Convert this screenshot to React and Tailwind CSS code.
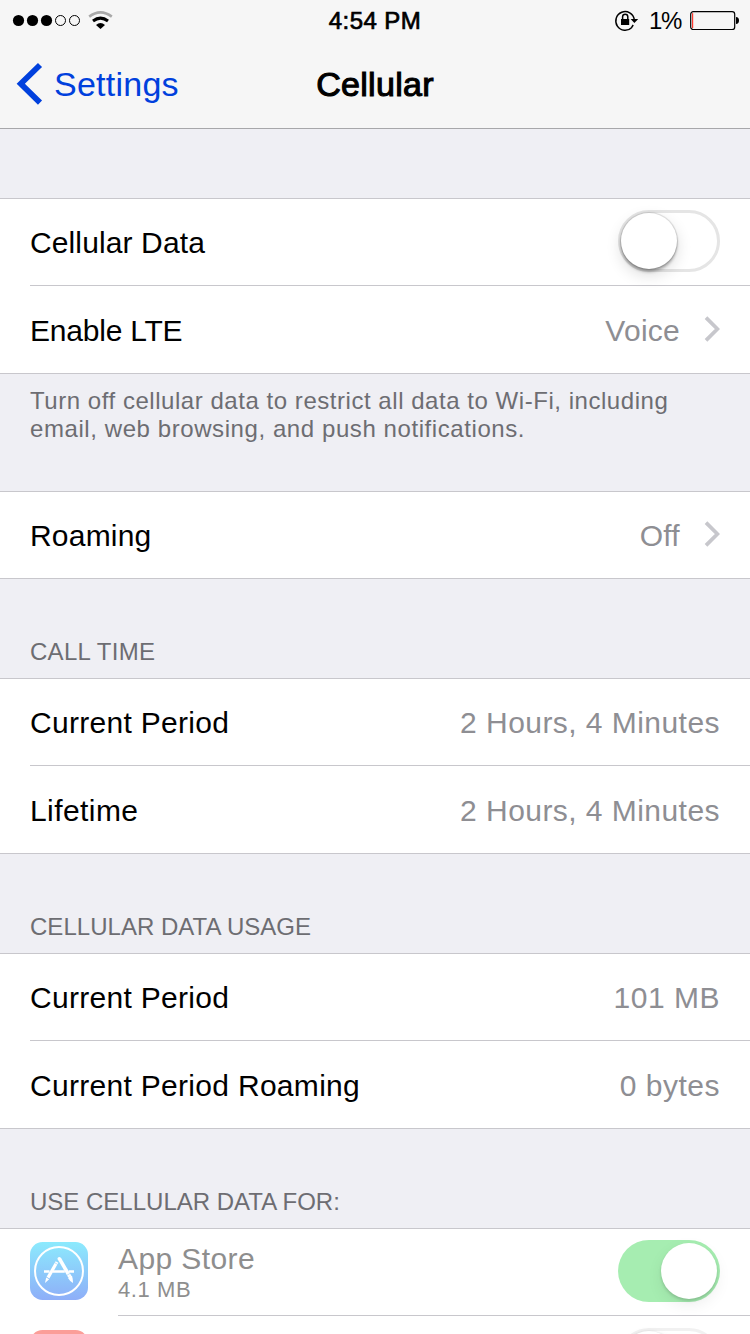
import React from 'react';

function Chevron() {
  return (
    <svg className="ml-[23px] mt-[-4px] shrink-0" width="17" height="28" viewBox="0 0 17 28" fill="none">
      <path d="M3 2.6 L14.4 14 L3 25.4" stroke="#c7c7cc" strokeWidth="3.7" />
    </svg>
  );
}

function Label({ children, track }) {
  return <span className={'text-[30px] leading-[36px] text-black ' + track}>{children}</span>;
}

function Value({ children, track }) {
  return <span className={'ml-auto text-[30px] leading-[36px] text-[#8e8e93] ' + track}>{children}</span>;
}

function FirstRow({ children }) {
  return (
    <div className="flex h-[87px] pl-[30px]">
      <div className="flex grow items-center border-b border-[#c8c7cc] pr-[30px] pt-[2px]">{children}</div>
    </div>
  );
}

function LastRow({ children }) {
  return <div className="flex h-[87px] items-center px-[30px] pt-[3px]">{children}</div>;
}

function Group({ children }) {
  return <section className="border-y border-[#c8c7cc] bg-white">{children}</section>;
}

function SectionTitle({ children, track }) {
  return (
    <h2 className={'flex h-[99px] items-end px-[30px] pb-[11px] text-[24px] leading-[30px] text-[#6d6d72] ' + track}>
      {children}
    </h2>
  );
}

function StatusBar() {
  return (
    <div className="grid h-[40px] grid-cols-3">
      <div className="flex items-start">
        <svg width="120" height="40" viewBox="0 0 120 40" fill="none">
          <circle cx="18.5" cy="20.5" r="5.6" fill="#000" />
          <circle cx="32.5" cy="20.5" r="5.6" fill="#000" />
          <circle cx="46.5" cy="20.5" r="5.6" fill="#000" />
          <circle cx="60.5" cy="20.5" r="5" stroke="#000" strokeWidth="1" />
          <circle cx="74.5" cy="20.5" r="5" stroke="#000" strokeWidth="1" />
          <path d="M89.2 16.6 Q100.5 8 111.8 16.6" stroke="#a9a9a9" strokeWidth="2.6" />
          <path d="M93 21 Q100.5 15.2 108 21" stroke="#000" strokeWidth="3" />
          <path d="M96 24.9 Q100.5 21 105 24.9 L100.5 29 Z" fill="#000" />
        </svg>
      </div>
      <div className="flex justify-center pt-[6px] text-[24px] leading-[30px] tracking-[0.45px] text-black [-webkit-text-stroke:0.7px_#000]">
        4:54 PM
      </div>
      <div className="flex justify-end pr-[10px]">
        <svg className="mt-[7px]" width="26" height="26" viewBox="0 0 26 26" fill="none">
          <path d="M17.8 20.4 A9.3 9.3 0 1 1 20.3 12.5 M17.5 20.6 L19.2 18" stroke="#000" strokeWidth="1.5" />
          <path d="M16.6 12 H24.2 L20.4 16 Z" fill="#000" />
          <path d="M8.6 13 V9.8 A2.6 2.6 0 0 1 13.8 9.8 V13" stroke="#000" strokeWidth="1.5" />
          <path d="M7 12 H15.2 V18 H7 Z" fill="#000" />
        </svg>
        <span className="ml-[9px] mt-[6px] text-[24px] leading-[30px] tracking-[-1.3px] text-black">1%</span>
        <svg className="ml-[9px] mt-[10px]" width="50" height="22" viewBox="0 0 50 22" fill="none">
          <rect x="0.7" y="1.7" width="44" height="17.8" rx="2.6" stroke="#000" strokeWidth="1.2" />
          <rect x="2" y="3.2" width="1.2" height="14.8" fill="#ff3b30" />
          <path d="M46 7 Q49 7.4 49 10.5 Q49 13.6 46 14 Z" fill="#000" />
        </svg>
      </div>
    </div>
  );
}

function NavBar() {
  return (
    <div className="grid h-[88px] grid-cols-3">
      <div className="flex pl-[16px] pt-[22px]">
        <svg width="28" height="44" viewBox="0 0 28 44" fill="none">
          <path d="M24 3 L4.8 21.8 L24 40.6" stroke="#0040dd" strokeWidth="5.8" />
        </svg>
        <span className="ml-[10px] mt-[2px] text-[34px] leading-[40px] tracking-[0.25px] text-[#0040dd]">Settings</span>
      </div>
      <h1 className="flex justify-center pt-[24px] text-[34px] leading-[40px] tracking-[0.3px] text-black [-webkit-text-stroke:1.1px_#000]">
        Cellular
      </h1>
    </div>
  );
}

function AppStoreIcon() {
  return (
    <svg className="mt-[13px] shrink-0" width="58" height="58" viewBox="0 0 58 58" fill="none">
      <defs>
        <linearGradient id="store" x1="0" y1="0" x2="0" y2="1">
          <stop offset="0" stopColor="#8ceafd" />
          <stop offset="1" stopColor="#8eaef8" />
        </linearGradient>
      </defs>
      <rect width="58" height="58" rx="12.5" fill="url(#store)" />
      <circle cx="29" cy="29" r="24" stroke="#fff" strokeWidth="2" />
      <path d="M14 29.5 H19.5 M22.6 29.5 H34.8 M38.8 29.5 H44" stroke="#fff" strokeWidth="2.6" />
      <path d="M27 20 L18 35.6" stroke="#fff" strokeWidth="3.2" />
      <path d="M16.2 35.6 L19.2 37.3 L15 41 Z" fill="#fff" />
      <path d="M29.4 16.6 L39.8 34.6" stroke="#fff" strokeWidth="3.6" />
      <circle cx="29.3" cy="16.8" r="1.8" fill="#fff" />
      <path d="M38 36 Q40 33.6 42 33.8 Q43 37 43 41 Q39.6 39 38 36 Z" fill="#fff" />
      <path d="M24.9 20.8 L28.3 22.8 M37 33.2 L40.5 31.2" stroke="#8dcffb" strokeWidth="0.6" />
    </svg>
  );
}

function SwitchOff() {
  return (
    <div className="ml-auto mt-[-4px] h-[62px] w-[102px] rounded-full border-[3px] border-[#e5e5e5] bg-white">
      <div className="h-[56px] w-[56px] rounded-full bg-white shadow-[0_0_1px_1px_rgba(0,0,0,0.13),0_3px_3px_rgba(0,0,0,0.28),0_6px_16px_rgba(0,0,0,0.14)]" />
    </div>
  );
}

function SwitchOn() {
  return (
    <div className="ml-auto mt-[11px] flex h-[62px] w-[102px] justify-end rounded-full bg-[#a6edb1] p-[3px]">
      <div className="h-[56px] w-[56px] rounded-full bg-white shadow-[0_2px_3px_rgba(0,0,0,0.15),0_6px_16px_rgba(0,0,0,0.07)]" />
    </div>
  );
}

export default function App() {
  return (
    <div className="flex h-[1334px] w-[750px] flex-col overflow-hidden bg-[#efeff4] font-['Liberation_Sans',Arial,sans-serif] [&>*]:shrink-0">
      <header className="border-b border-[#a7a7aa] bg-[#f6f6f6]">
        <StatusBar />
        <NavBar />
      </header>

      <div className="h-[69px]" />
      <Group>
        <FirstRow>
          <Label track="tracking-[0.12px]">Cellular Data</Label>
          <SwitchOff />
        </FirstRow>
        <LastRow>
          <Label track="tracking-[-0.22px]">Enable LTE</Label>
          <Value track="tracking-[0.25px]">Voice</Value>
          <Chevron />
        </LastRow>
      </Group>
      <p className="h-[117px] whitespace-nowrap px-[30px] pt-[13px] text-[24px] leading-[28px] tracking-[0.54px] text-[#6d6d72]">
        Turn off cellular data to restrict all data to Wi-Fi, including
        <br />
        <span className="tracking-[0.58px]">email, web browsing, and push notifications.</span>
      </p>

      <Group>
        <div className="flex h-[86px] items-center px-[30px] pt-[2px]">
          <Label track="tracking-[0.2px]">Roaming</Label>
          <Value track="tracking-[0.3px]">Off</Value>
          <Chevron />
        </div>
      </Group>

      <SectionTitle track="tracking-[0.28px]">CALL TIME</SectionTitle>
      <Group>
        <FirstRow>
          <Label track="tracking-[0.3px]">Current Period</Label>
          <Value track="tracking-[0.45px]">2 Hours, 4 Minutes</Value>
        </FirstRow>
        <LastRow>
          <Label track="tracking-[0.42px]">Lifetime</Label>
          <Value track="tracking-[0.45px]">2 Hours, 4 Minutes</Value>
        </LastRow>
      </Group>

      <SectionTitle track="tracking-[0.03px]">CELLULAR DATA USAGE</SectionTitle>
      <Group>
        <FirstRow>
          <Label track="tracking-[0.3px]">Current Period</Label>
          <Value track="tracking-[0.5px]">101 MB</Value>
        </FirstRow>
        <LastRow>
          <Label track="tracking-[0.3px]">Current Period Roaming</Label>
          <Value track="tracking-[0.5px]">0 bytes</Value>
        </LastRow>
      </Group>

      <SectionTitle track="tracking-[0px]">USE CELLULAR DATA FOR:</SectionTitle>
      <Group>
        <div className="flex h-[87px] pl-[30px]">
          <AppStoreIcon />
          <div className="ml-[30px] flex grow border-b border-[#c8c7cc] pr-[30px]">
            <div className="flex flex-col pt-[12px] text-[#8e8e8e]">
              <span className="text-[30px] leading-[36px] tracking-[0.4px]">App Store</span>
              <span className="text-[22px] leading-[26px] tracking-[0.6px]">4.1 MB</span>
            </div>
            <SwitchOn />
          </div>
        </div>
        <div className="flex h-[87px] justify-between px-[30px] pt-[14px]">
          <div className="h-[58px] w-[58px] rounded-[12.5px] bg-[#fb9e99]" />
          <div className="mt-[-2px] h-[62px] w-[102px] rounded-full border-[3px] border-[#f1f1f1]">
            <div className="h-[56px] w-[56px] rounded-full bg-white shadow-[0_0_2px_rgba(0,0,0,0.12),0_3px_10px_rgba(0,0,0,0.08)]" />
          </div>
        </div>
      </Group>
    </div>
  );
}
